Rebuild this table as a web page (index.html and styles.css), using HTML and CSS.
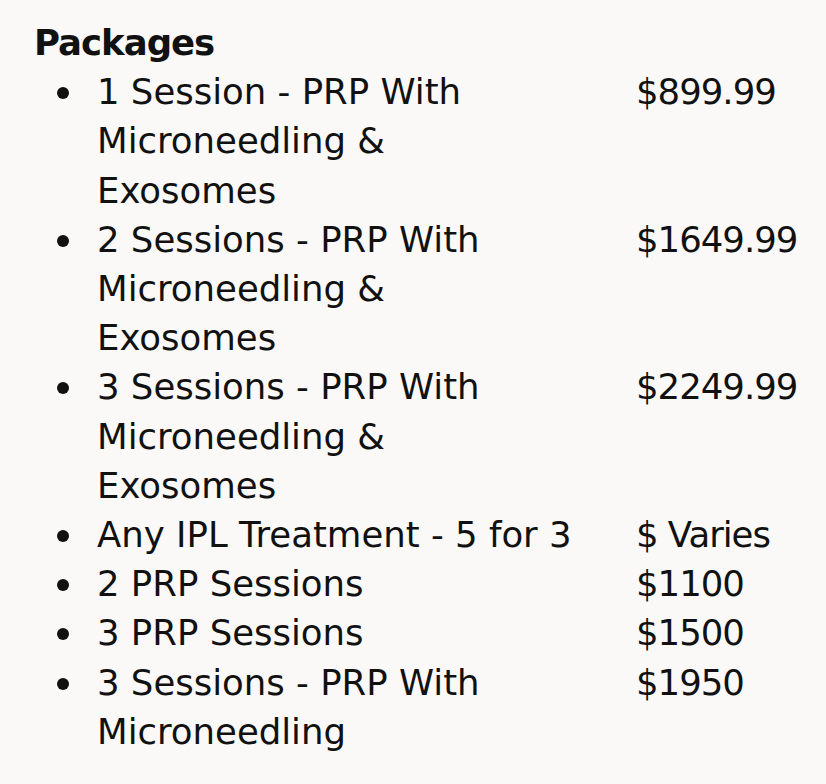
FILE: index.html
```html
<!DOCTYPE html>
<html lang="en">
<head>
<meta charset="utf-8">
<title>Packages</title>
<link rel="stylesheet" href="styles.css">
</head>
<body>
<section class="packages">
  <h2 class="title">Packages</h2>
  <ul class="list">
    <li class="item"><span class="dot"></span><span class="name">1 Session - PRP With<br>Microneedling &amp;<br>Exosomes</span><span class="price">$899.99</span></li>
    <li class="item"><span class="dot"></span><span class="name">2 Sessions - PRP With<br>Microneedling &amp;<br>Exosomes</span><span class="price">$1649.99</span></li>
    <li class="item"><span class="dot"></span><span class="name">3 Sessions - PRP With<br>Microneedling &amp;<br>Exosomes</span><span class="price">$2249.99</span></li>
    <li class="item"><span class="dot"></span><span class="name">Any IPL Treatment - 5 for 3</span><span class="price">$ Varies</span></li>
    <li class="item"><span class="dot"></span><span class="name">2 PRP Sessions</span><span class="price">$1100</span></li>
    <li class="item"><span class="dot"></span><span class="name">3 PRP Sessions</span><span class="price">$1500</span></li>
    <li class="item"><span class="dot"></span><span class="name">3 Sessions - PRP With<br>Microneedling</span><span class="price">$1950</span></li>
  </ul>
</section>
</body>
</html>
```

FILE: styles.css
```css
html, body {
  margin: 0;
  padding: 0;
  background: #faf9f7;
}

body {
  width: 826px;
  height: 784px;
  overflow: hidden;
  font-family: "DejaVu Sans", "Liberation Sans", sans-serif;
  font-size: 35.5px;
  line-height: 49.2px;
  color: #111111;
}

.packages {
  padding: 18px 0 0 34px;
}

.title {
  margin: 0;
  font-size: 35.5px;
  font-weight: 700;
  line-height: 49.2px;
  letter-spacing: -1px;
}

.list {
  margin: 0;
  padding: 0 0 0 23px;
  list-style: none;
}

.item {
  display: grid;
  grid-template-columns: 12px 511px auto;
  column-gap: 28px;
  align-items: start;
}

.dot {
  width: 12px;
  height: 12px;
  margin-top: 20px;
  border-radius: 50%;
  background: #111111;
}

.price {
  letter-spacing: -1px;
}
```
